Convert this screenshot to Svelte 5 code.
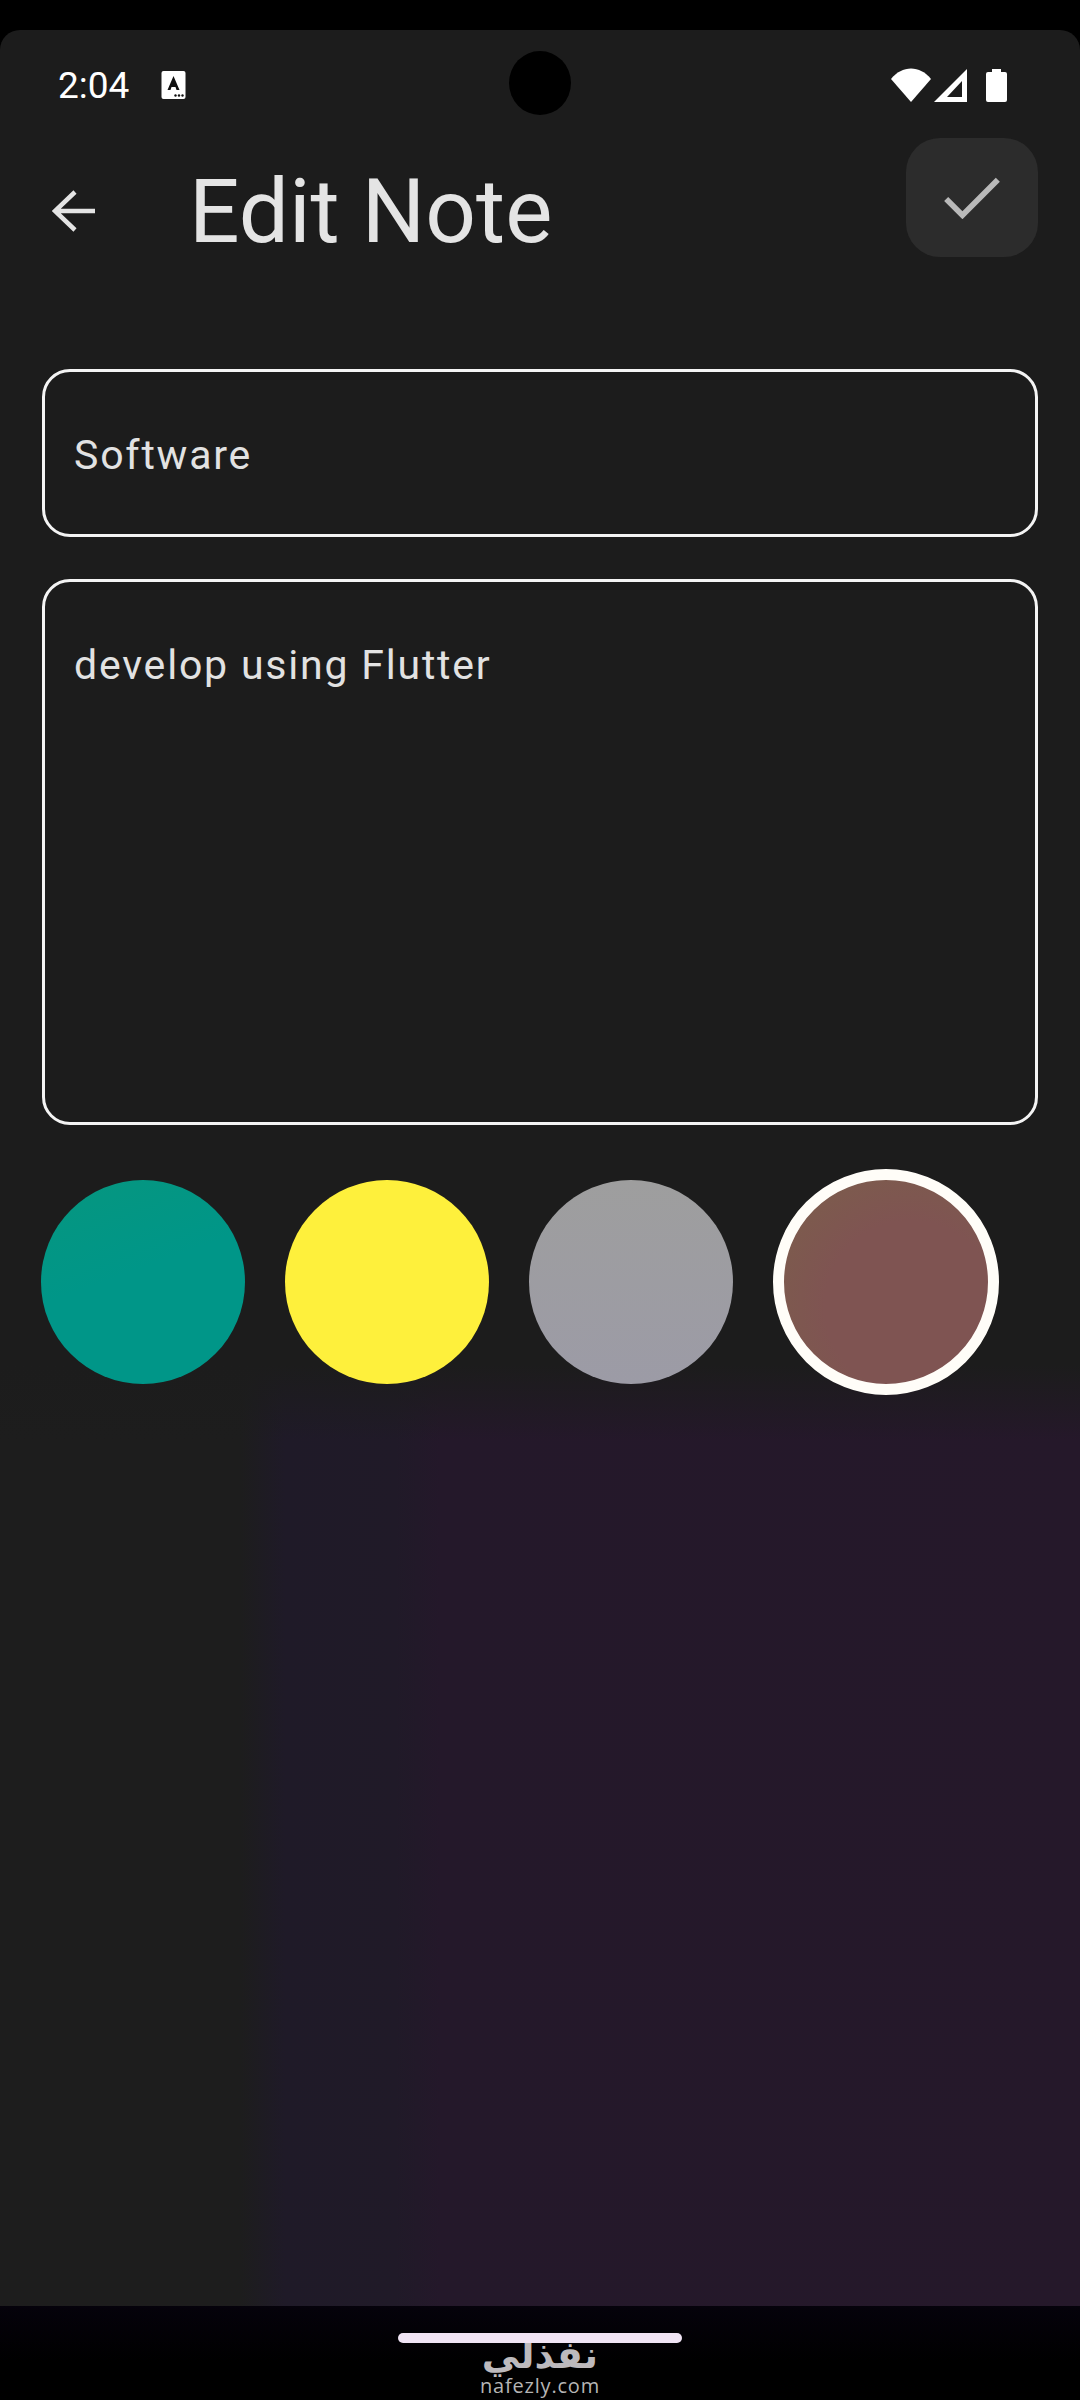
<script>
	const swatches = [
		{ name: 'teal', bg: 'linear-gradient(160deg, #06967f, #009688 45%)' },
		{ name: 'yellow', bg: '#fef03c' },
		{ name: 'grey', bg: 'linear-gradient(#9e9e9e, #9c9ba6)' },
		{ name: 'brown', bg: 'radial-gradient(circle at 62% 62%, #7f5452 48%, #7b5f4a 100%)', selected: true }
	];
</script>

<div class="screen">
	<div class="app">
		<div class="status">
			<span class="time">2:04</span>
			<svg class="a-icon" viewBox="0 0 24 28" aria-hidden="true">
				<rect width="24" height="28" rx="2" fill="#fff" />
				<path d="M12 5 L6 19 H9 L10 16 H14 L15 19 H18 Z" fill="#111" />
				<circle cx="14" cy="24.5" r="1.2" fill="#111" />
				<circle cx="17.5" cy="24.5" r="1.2" fill="#111" />
				<circle cx="21" cy="24.5" r="1.2" fill="#111" />
			</svg>
			<span class="camera"></span>
			<span class="status-right">
				<svg class="wifi" viewBox="0 0 40 34" aria-hidden="true">
					<path d="M0 11 C11 -3 29 -3 40 11 L20 34 Z" fill="#fff" />
				</svg>
				<svg class="signal" viewBox="0 0 34 33" aria-hidden="true">
					<path fill-rule="evenodd" d="M33 0 V33 H0 Z M28 12 L13 28 H28 Z" fill="#fff" />
				</svg>
				<svg class="battery" viewBox="0 0 21 33" aria-hidden="true">
					<path d="M6 0 H15 V3 H19 Q21 3 21 5 V31 Q21 33 19 33 H2 Q0 33 0 31 V5 Q0 3 2 3 H6 Z" fill="#fff" />
				</svg>
			</span>
		</div>

		<header class="bar">
			<button class="back" type="button" aria-label="Back">
				<svg viewBox="0 0 44 44" aria-hidden="true">
					<path d="M43 22 H4 M23 3 L3 22 L23 41" fill="none" stroke="#e4e4e4" stroke-width="4.5" />
				</svg>
			</button>
			<h1>Edit Note</h1>
			<button class="save" type="button" aria-label="Save">
				<svg viewBox="0 0 60 46" aria-hidden="true">
					<path d="M3 25 L20 42 L57 5" fill="none" stroke="#b9b9b9" stroke-width="6" />
				</svg>
			</button>
		</header>

		<div class="form">
			<div class="field title">Software</div>
			<div class="field body">develop using Flutter</div>

			<div class="colors">
				{#each swatches as s}
					<button
						class="swatch"
						class:selected={s.selected}
						type="button"
						aria-label={s.name}
						style="background: {s.bg}"
					></button>
				{/each}
			</div>
		</div>
	</div>

	<div class="nav">
		<span class="handle"></span>
		<span class="mark-ar" lang="ar" dir="rtl">نفذلي</span>
		<span class="mark">nafezly.com</span>
	</div>
</div>

<style>
	:global(body) {
		margin: 0;
		background: #000;
	}

	.screen {
		width: 1080px;
		height: 2400px;
		padding-top: 30px;
		box-sizing: border-box;
		display: flex;
		flex-direction: column;
		background: #000;
		font-family: Roboto, 'Liberation Sans', sans-serif;
		overflow: hidden;
	}

	.app {
		flex: 1;
		min-height: 0;
		border-radius: 20px 20px 0 0;
		background:
			linear-gradient(#1c1c1c 0, #1c1c1c 1335px, rgba(28, 28, 28, 0) 1410px),
			linear-gradient(90deg, #1d1d1d 0, #1d1d1d 240px, #1f1a28 285px, #201a28 395px, #24182a 440px, #25182a 1080px);
	}

	.status {
		height: 70px;
		margin-top: 20px;
		padding: 0 30px 0 58px;
		display: flex;
		align-items: center;
		position: relative;
		color: #fff;
	}

	.time {
		font-size: 37px;
		line-height: 1;
	}

	.a-icon {
		width: 25px;
		height: 28px;
		margin-left: 32px;
	}

	.camera {
		position: absolute;
		left: 509px;
		top: 1px;
		width: 62px;
		height: 64px;
		border-radius: 50%;
		background: #000;
	}

	.status-right {
		margin-left: auto;
		margin-right: 43px;
		display: flex;
		align-items: center;
		gap: 3px;
	}

	.wifi {
		width: 40px;
		height: 34px;
	}

	.signal {
		width: 34px;
		height: 33px;
	}

	.battery {
		width: 21px;
		height: 33px;
		margin-left: 15px;
	}

	.bar {
		height: 108px;
		margin-top: 37px;
		padding: 0 42px 0 52px;
		display: flex;
		align-items: center;
	}

	button {
		border: 0;
		padding: 0;
		background: none;
	}

	.back {
		width: 44px;
		height: 44px;
	}

	.back svg {
		display: block;
		width: 44px;
		height: 44px;
	}

	h1 {
		margin: 0 0 0 93px;
		font-size: 89px;
		font-weight: 400;
		line-height: 1;
		color: #e4e4e4;
	}

	.save {
		margin-left: auto;
		margin-bottom: 28px;
		flex: none;
		width: 132px;
		height: 119px;
		border-radius: 34px;
		background: #2c2c2c;
		display: flex;
		align-items: center;
		justify-content: center;
	}

	.save svg {
		width: 58px;
		height: 44px;
	}

	.form {
		margin-top: 104px;
		padding: 0 42px;
	}

	.field {
		box-sizing: border-box;
		border: 3px solid #f4f4f4;
		border-radius: 28px;
		padding: 0 29px;
		font-size: 41px;
		letter-spacing: 1.8px;
		color: #e2e2e2;
	}

	.title {
		height: 168px;
		line-height: 166px;
	}

	.body {
		height: 546px;
		margin-top: 42px;
		padding-top: 58px;
		line-height: 50px;
	}

	.colors {
		margin: 44px 0 0 -1px;
		display: flex;
		align-items: center;
		gap: 40px;
	}

	.swatch {
		width: 204px;
		height: 204px;
		border-radius: 50%;
		flex: none;
	}

	.selected {
		box-sizing: content-box;
		border: 11px solid #fffdf8;
		background-origin: border-box;
	}

	.nav {
		height: 94px;
		flex: none;
		display: flex;
		flex-direction: column;
		align-items: center;
		background: linear-gradient(#05020b, #000 60%);
		overflow: hidden;
	}

	.handle {
		width: 284px;
		height: 10px;
		margin-top: 27px;
		border-radius: 5px;
		background: #f0e4f4;
		position: relative;
		z-index: 1;
	}

	.mark-ar {
		margin-top: -3px;
		font-family: 'DejaVu Sans', sans-serif;
		font-weight: 700;
		font-size: 38px;
		line-height: 30px;
		color: #bdbabd;
	}

	.mark {
		margin-top: 6px;
		font-family: 'Open Sans', sans-serif;
		font-size: 20px;
		line-height: 20px;
		letter-spacing: 0.8px;
		color: #b5b5b5;
	}
</style>
